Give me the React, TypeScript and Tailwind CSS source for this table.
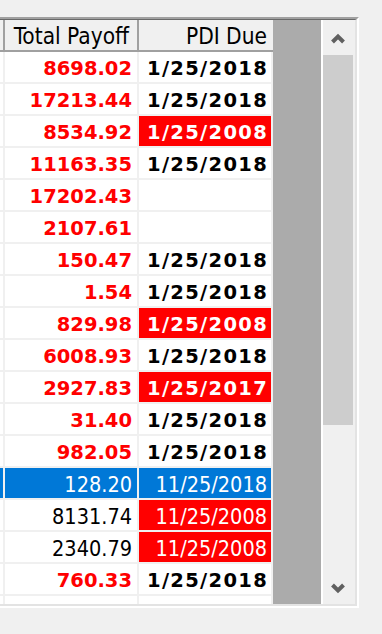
import { ReactNode } from "react";

type Row = {
  amount: string;
  due: string;
  overdue?: boolean;
  plain?: boolean;
  selected?: boolean;
};

const rows: Row[] = [
  { amount: "8698.02", due: "1/25/2018" },
  { amount: "17213.44", due: "1/25/2018" },
  { amount: "8534.92", due: "1/25/2008", overdue: true },
  { amount: "11163.35", due: "1/25/2018" },
  { amount: "17202.43", due: "" },
  { amount: "2107.61", due: "" },
  { amount: "150.47", due: "1/25/2018" },
  { amount: "1.54", due: "1/25/2018" },
  { amount: "829.98", due: "1/25/2008", overdue: true },
  { amount: "6008.93", due: "1/25/2018" },
  { amount: "2927.83", due: "1/25/2017", overdue: true },
  { amount: "31.40", due: "1/25/2018" },
  { amount: "982.05", due: "1/25/2018" },
  { amount: "128.20", due: "11/25/2018", plain: true, selected: true },
  { amount: "8131.74", due: "11/25/2008", plain: true, overdue: true },
  { amount: "2340.79", due: "11/25/2008", plain: true, overdue: true },
  { amount: "760.33", due: "1/25/2018" },
  { amount: "", due: "" },
];

function HeaderCell({ children, pad }: { children: ReactNode; pad: string }) {
  return (
    <div className={`w-[132px] h-[30px] flex items-center justify-end pt-[3px] text-[22.5px] text-black bg-[#f0f0f0] whitespace-nowrap ${pad}`}>
      {children}
    </div>
  );
}

function DataRow({ row }: { row: Row }) {
  const amountColor = row.selected ? "bg-[#0078d7] text-white" : row.plain ? "bg-white text-black" : "bg-white text-[#ff0000]";
  const dueColor = row.selected
    ? "bg-[#0078d7] text-white"
    : row.overdue
    ? "bg-[#ff0000] text-white"
    : "bg-white text-black";
  const weight = row.plain
    ? "font-normal text-[21.5px] pt-[4px]"
    : "font-bold text-[19.5px] pt-[3px] font-['DejaVu_Sans','Liberation_Sans',sans-serif]";
  // bold dates are set a little looser than the amounts
  const duePad = row.plain ? "pr-[4px]" : "pr-[3px] tracking-[1.3px]";

  return (
    <div className="flex h-[32px] border-b-2 border-[#f0f0f0] shrink-0">
      <div className={`w-[3px] h-[30px] ${row.selected ? "bg-[#0078d7]" : "bg-white"}`} />
      <div className="w-[2px] h-[30px] bg-[#f0f0f0]" />
      <div className={`w-[132px] h-[30px] flex items-center justify-end pr-[5px] ${weight} ${amountColor}`}>
        {row.amount}
      </div>
      <div className="w-[2px] h-[30px] bg-[#f0f0f0]" />
      <div className={`w-[132px] h-[30px] flex items-center justify-end ${duePad} ${weight} ${dueColor}`}>
        {row.due}
      </div>
      <div className="w-[2px] h-[30px] bg-[#f0f0f0]" />
    </div>
  );
}

function Chevron({ down }: { down?: boolean }) {
  return (
    <svg width="14" height="12" viewBox="0 0 14 12">
      <polyline
        points={down ? "1.5,3 7,8.5 12.5,3" : "1.5,9 7,3.5 12.5,9"}
        fill="none"
        stroke="#606060"
        strokeWidth="4"
        strokeLinejoin="miter"
      />
    </svg>
  );
}

export default function App() {
  return (
    <div className="min-h-screen bg-[#f0f0f0] pt-[17px] font-['DejaVu_Sans_Condensed','Liberation_Sans',sans-serif]">
      <div className="w-[359px] border-t-2 border-t-[#a0a0a0] border-r-2 border-b-2 border-r-white border-b-white">
        <div className="h-[587px] flex border-t border-t-[#696969] border-r-2 border-b-2 border-r-[#e3e3e3] border-b-[#e3e3e3]">
          {/* payoff table */}
          <div className="w-[273px] flex flex-col overflow-hidden">
            <div className="flex h-[32px] shrink-0 border-b-2 border-[#a0a0a0]">
              <div className="w-[3px] bg-[#f0f0f0]" />
              <div className="w-[2px] bg-[#a0a0a0]" />
              <HeaderCell pad="pr-[8px]">Total Payoff</HeaderCell>
              <div className="w-[2px] bg-[#a0a0a0]" />
              <HeaderCell pad="pr-[4px]">PDI Due</HeaderCell>
              <div className="w-[2px] bg-[#f0f0f0]" />
            </div>
            {rows.map((row, i) => (
              <DataRow key={i} row={row} />
            ))}
          </div>

          {/* empty area right of the last column */}
          <div className="w-[48px] bg-[#ababab]" />
          <div className="w-[2px] bg-white" />

          {/* vertical scrollbar */}
          <div className="w-[32px] bg-[#f0f0f0] flex flex-col">
            <div className="h-[35px] flex items-center justify-center pr-[2px] pt-[2px]">
              <Chevron />
            </div>
            <div className="w-[30px] h-[370px] bg-[#cdcdcd]" />
            <div className="flex-1" />
            <div className="h-[32px] flex items-center justify-center pr-[2px]">
              <Chevron down />
            </div>
          </div>
        </div>
      </div>
    </div>
  );
}
